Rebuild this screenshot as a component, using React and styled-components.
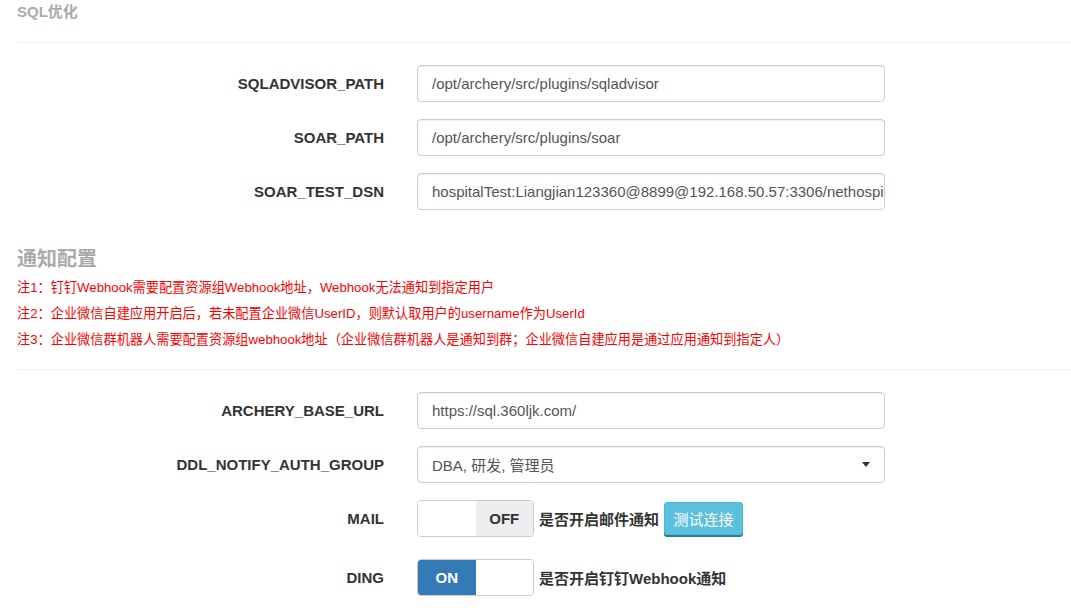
import React from "react";
import styled, { createGlobalStyle } from "styled-components";

const GlobalStyle = createGlobalStyle`
  html, body { margin: 0; padding: 0; background: #fff; }
  body {
    font-family: "Liberation Sans", Arial, "Noto Sans CJK SC", sans-serif;
    font-size: 15px;
    color: #333;
  }
`;

// === Page ===
const Page = styled.div`
  width: 1071px;
  height: 616px;
  overflow: hidden;
  padding-left: 17px;
  box-sizing: border-box;
`;

const SmallTitle = styled.h5`
  margin: 0;
  padding-top: 4px;
  height: 42px;
  box-sizing: border-box;
  font-size: 15px;
  font-weight: bold;
  color: #aaa;
  line-height: 16px;
`;

const Rule = styled.hr`
  margin: ${({ mt }) => mt || 0}px 0 0 0;
  border: 0;
  border-top: 1px solid #eee;
  width: 1100px;
`;

const Heading = styled.h4`
  margin: 0;
  padding-top: ${({ pt }) => pt || 0}px;
  font-size: 20px;
  font-weight: bold;
  color: #aaa;
  line-height: 24px;
  font-family: "Noto Sans CJK SC", sans-serif;
`;

const Notes = styled.div`
  margin-top: 5px;
  display: flex;
  flex-direction: column;
`;

const Note = styled.div`
  color: #f00;
  font-size: 13.2px;
  height: 26px;
  line-height: 26px;
  white-space: nowrap;
  font-family: "Liberation Sans", "Noto Sans CJK SC", sans-serif;
`;

// === Form rows ===
const Form = styled.div`
  display: flex;
  flex-direction: column;
  padding-top: ${({ pt }) => pt || 0}px;
`;

const Row = styled.div`
  display: grid;
  grid-template-columns: 367px auto;
  column-gap: 33px;
  align-items: center;
  margin-bottom: ${({ mb }) => (mb === undefined ? 17 : mb)}px;
`;

const Label = styled.label`
  text-align: right;
  font-weight: bold;
  font-size: 15px;
  color: #333;
`;

const Input = styled.div`
  width: 468px;
  height: 37px;
  box-sizing: border-box;
  border: 1px solid #ccc;
  border-radius: 4px;
  box-shadow: inset 0 1px 1px rgba(0, 0, 0, 0.075);
  padding: 0 14px;
  display: flex;
  align-items: center;
  justify-content: space-between;
  color: #555;
  font-size: 15px;
  white-space: nowrap;
  overflow: hidden;
`;

const SelectText = styled.span`
  font-family: "Liberation Sans", "Noto Sans CJK SC", sans-serif;
`;

const Caret = styled.span`
  width: 0;
  height: 0;
  border-left: 4px solid transparent;
  border-right: 4px solid transparent;
  border-top: 5px solid #333;
`;

const Inline = styled.div`
  display: flex;
  align-items: center;
`;

const Switch = styled.div`
  display: flex;
  width: 117px;
  height: 37px;
  box-sizing: border-box;
  border: 1px solid #ccc;
  border-radius: 4px;
  overflow: hidden;
`;

const Half = styled.div`
  width: 58px;
  display: flex;
  align-items: center;
  justify-content: center;
  font-weight: bold;
  font-size: 15px;
  background: ${({ tone }) =>
    tone === "on" ? "#337ab7" : tone === "off" ? "#eee" : "#fff"};
  color: ${({ tone }) => (tone === "on" ? "#fff" : "#333")};
`;

const SwitchText = styled.span`
  margin-left: 5px;
  font-weight: bold;
  font-size: 15px;
  color: #333;
  font-family: "Liberation Sans", "Noto Sans CJK SC", sans-serif;
`;

const TestButton = styled.button`
  margin-left: 5px;
  width: 79px;
  height: 33px;
  background: #5bc0de;
  border: 1px solid #46b8da;
  border-radius: 3px;
  box-shadow: 0 2px 0 #2b7d96;
  color: #fff;
  font-size: 15px;
  font-family: "Noto Sans CJK SC", sans-serif;
  padding: 0;
`;

const notes = [
  "注1：钉钉Webhook需要配置资源组Webhook地址，Webhook无法通知到指定用户",
  "注2：企业微信自建应用开启后，若未配置企业微信UserID，则默认取用户的username作为UserId",
  "注3：企业微信群机器人需要配置资源组webhook地址（企业微信群机器人是通知到群；企业微信自建应用是通过应用通知到指定人）",
];

const sqlRows = [
  ["SQLADVISOR_PATH", "/opt/archery/src/plugins/sqladvisor"],
  ["SOAR_PATH", "/opt/archery/src/plugins/soar"],
  ["SOAR_TEST_DSN", "hospitalTest:Liangjian123360@8899@192.168.50.57:3306/nethospital"],
];

export default function App() {
  return (
    <Page>
      <GlobalStyle />
      <SmallTitle>SQL优化</SmallTitle>
      <Rule />
      <Form pt={22}>
        {sqlRows.map(([label, value]) => (
          <Row key={label}>
            <Label>{label}</Label>
            <Input>{value}</Input>
          </Row>
        ))}
      </Form>
      <Heading pt={19}>通知配置</Heading>
      <Notes>
        {notes.map((n) => (
          <Note key={n}>{n}</Note>
        ))}
      </Notes>
      <Rule mt={16} />
      <Form pt={22}>
        <Row>
          <Label>ARCHERY_BASE_URL</Label>
          <Input>https://sql.360ljk.com/</Input>
        </Row>
        <Row mb={17}>
          <Label>DDL_NOTIFY_AUTH_GROUP</Label>
          <Input>
            <SelectText>DBA, 研发, 管理员</SelectText>
            <Caret />
          </Input>
        </Row>
        <Row mb={22}>
          <Label>MAIL</Label>
          <Inline>
            <Switch>
              <Half />
              <Half tone="off">OFF</Half>
            </Switch>
            <SwitchText>是否开启邮件通知</SwitchText>
            <TestButton>测试连接</TestButton>
          </Inline>
        </Row>
        <Row>
          <Label>DING</Label>
          <Inline>
            <Switch>
              <Half tone="on">ON</Half>
              <Half />
            </Switch>
            <SwitchText>是否开启钉钉Webhook通知</SwitchText>
          </Inline>
        </Row>
      </Form>
    </Page>
  );
}
